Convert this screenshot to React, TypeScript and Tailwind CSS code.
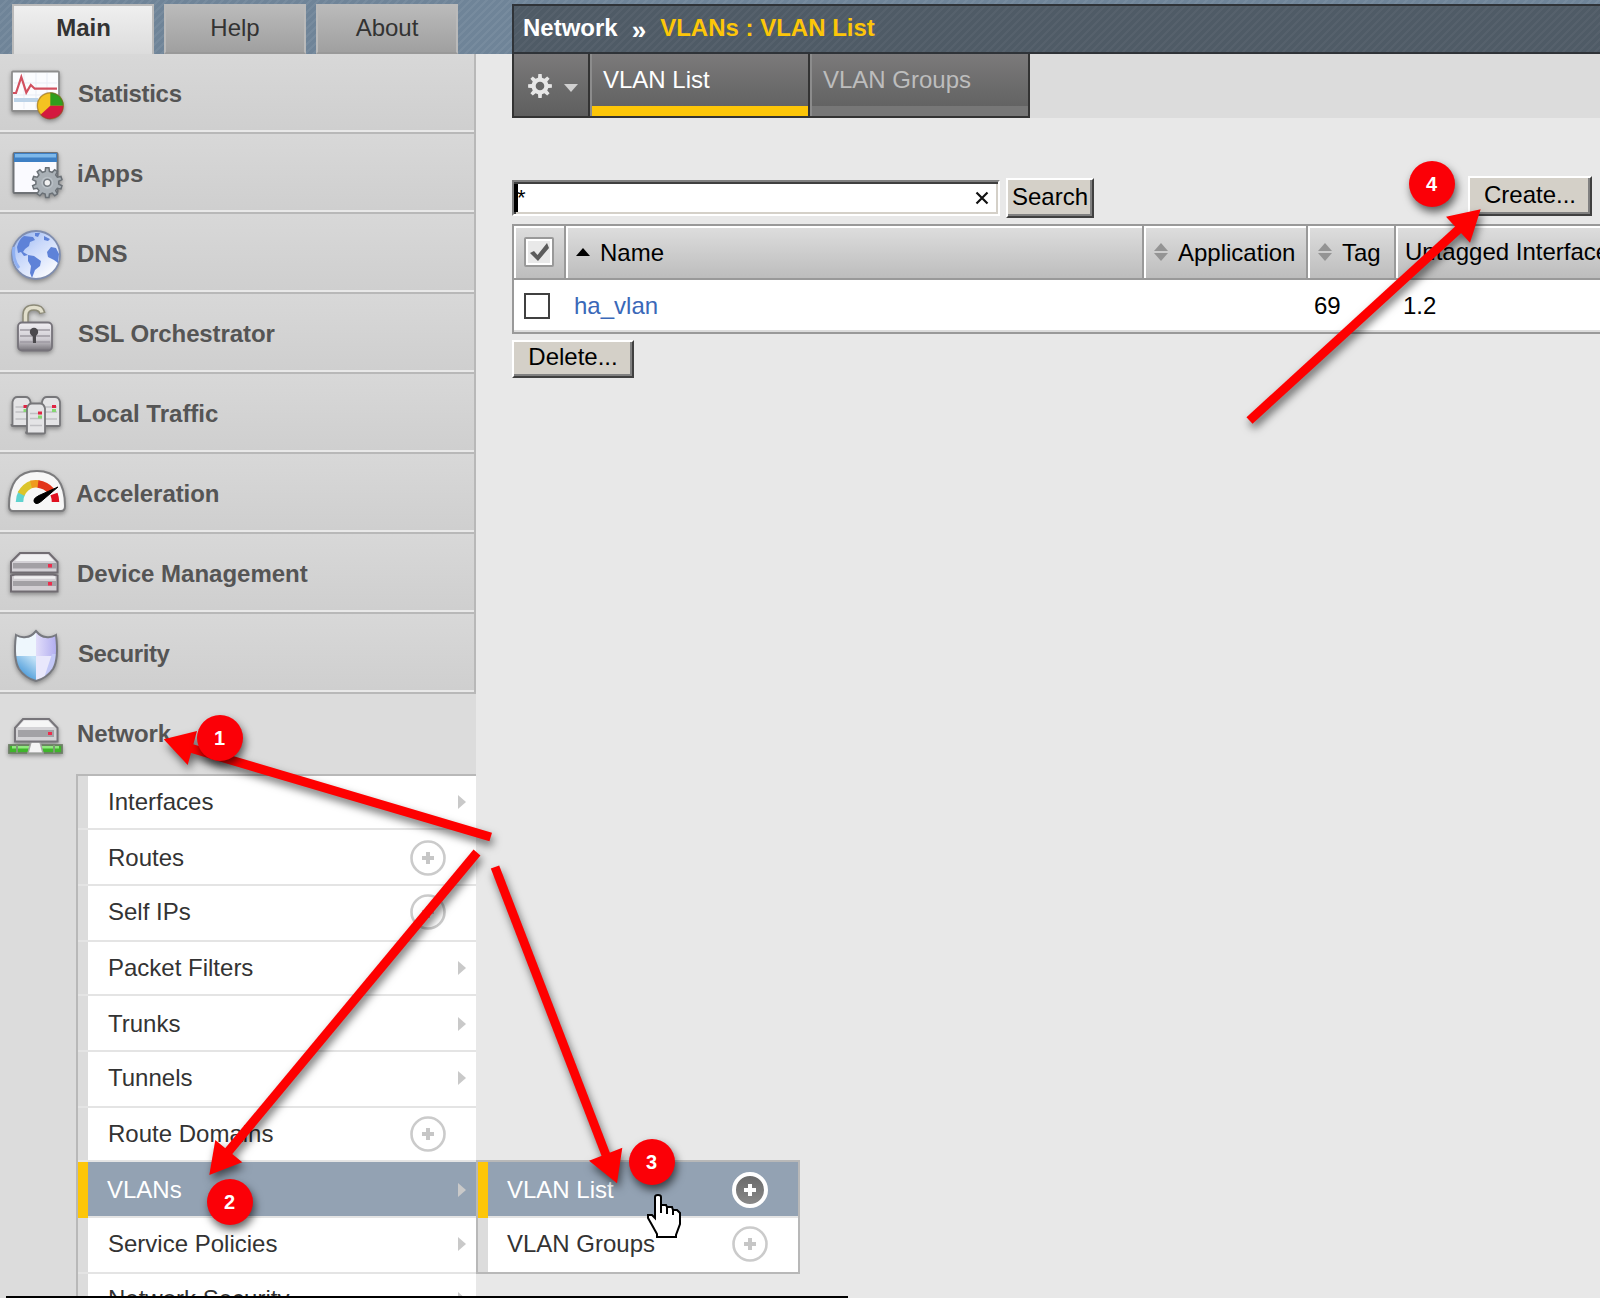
import React from "react";

type IconProps = { children: React.ReactNode };

function Icon({ children }: IconProps) {
  return (
    <svg
      width="76"
      height="76"
      viewBox="0 0 76 76"
      className="shrink-0 drop-shadow-[0_2px_2px_rgba(0,0,0,0.35)]"
    >
      {children}
    </svg>
  );
}

function gearPath(cx: number, cy: number, outer: number, inner: number, teeth: number) {
  const pts: string[] = [];
  const step = (Math.PI * 2) / teeth;
  for (let i = 0; i < teeth; i++) {
    const a = i * step - Math.PI / 2;
    const corners: [number, number][] = [
      [a - step * 0.3, inner],
      [a - step * 0.18, outer],
      [a + step * 0.18, outer],
      [a + step * 0.3, inner],
    ];
    corners.forEach(([t, r]) =>
      pts.push(`${(cx + Math.cos(t) * r).toFixed(2)},${(cy + Math.sin(t) * r).toFixed(2)}`)
    );
  }
  return `M${pts.join("L")}Z`;
}

const StatisticsIcon = () => (
  <Icon>
    <rect x="12" y="17.500" width="47" height="39.500" rx="1" fill="#fbfcfe" stroke="#8d8d8d" strokeWidth="1.800" />
    <path d="M14 29h43M14 41h43M24 19v36M36 19v36M47 19v36" stroke="#e9edf5" strokeWidth="1" />
    <rect x="14" y="44" width="24" height="4" fill="#bcd3e8" />
    <path d="M13 39h3l5.300-16 5 15.500 4.500-7.500 4 3.700H57" fill="none" stroke="#d2505f" strokeWidth="2.200" />
    <circle cx="50.300" cy="51.700" r="13.300" fill="#f4c321" />
    <path d="M50.300 51.700V38.400A13.300 13.300 0 0 1 63.600 51.700Z" fill="#2f9e1d" />
    <path d="M50.300 51.700H63.600A13.300 13.300 0 0 1 40.500 60.700Z" fill="#d4193f" />
    <circle cx="50.300" cy="51.700" r="13" fill="none" stroke="#7d5a2c" strokeOpacity="0.500" strokeWidth="1.400" />
  </Icon>
);

const IAppsIcon = () => (
  <Icon>
    <rect x="13.500" y="19" width="44" height="40" rx="1" fill="#fafaff" stroke="#6f7276" strokeWidth="2" />
    <rect x="14" y="19" width="43" height="9" fill="#3d7fc4" />
    <rect x="15" y="20" width="41" height="3.500" fill="#7db8ea" />
    <path d={gearPath(47.3, 48.7, 15, 11.5, 10)} fill="#a9b0b6" stroke="#6a7076" strokeWidth="1.500" />
    <circle cx="47.300" cy="48.700" r="6" fill="#b9c0c6" />
    <circle cx="47.300" cy="48.700" r="3.500" fill="#f2f2f2" stroke="#747a80" strokeWidth="1.600" />
  </Icon>
);

const DnsIcon = () => (
  <Icon>
    <defs>
      <linearGradient id="globe" x1="0" y1="0" x2="0.800" y2="1">
        <stop offset="0" stopColor="#8fb0ee" />
        <stop offset="0.450" stopColor="#c9d8fa" />
        <stop offset="1" stopColor="#ffffff" />
      </linearGradient>
    </defs>
    <circle cx="36" cy="41" r="24" fill="url(#globe)" stroke="#7f8dae" strokeWidth="1.800" />
    <path d="M17 33q2-8 7-11l9 1 2 3-5 2-1 4-4 3-2 3 5 3-4 1-3-4-3 1z" fill="#5e82d8" />
    <path d="M35 19l5 0-2 4-3-1zM44 22l6 3-2 2-4-1z" fill="#5e82d8" />
    <path d="M28 41l6 1 7 5-1 5-5 4-3 8-2-5 1-7-3-5z" fill="#5e82d8" />
    <path d="M47 38l4-5 5 1 3 6-1 9-4-3-6-3z" fill="#5e82d8" />
    <path d="M14 33q-2 12 5 21" fill="none" stroke="#8fb0f2" strokeWidth="3" />
  </Icon>
);

const SslIcon = () => (
  <Icon>
    <defs>
      <linearGradient id="lock" x1="0" y1="0" x2="0" y2="1">
        <stop offset="0" stopColor="#f0eef2" />
        <stop offset="0.600" stopColor="#cfccd2" />
        <stop offset="1" stopColor="#77747a" />
      </linearGradient>
    </defs>
    <path d="M25.500 29V21q0-7.500 8.500-7.500 7 0 8.500 6" fill="none" stroke="#8c8a78" strokeWidth="6.500" />
    <path d="M25.500 29V21q0-7.500 8.500-7.500 7 0 8 5" fill="none" stroke="#e2dfcc" strokeWidth="3.500" />
    <rect x="18" y="28.500" width="34" height="28" rx="4" fill="url(#lock)" stroke="#76737a" strokeWidth="1.800" />
    <path d="M20 36h30M20 42h30M20 48h30" stroke="#9e9aa2" strokeWidth="1.400" />
    <circle cx="34" cy="38" r="4.200" fill="#4b494d" />
    <path d="M32.500 40h3.500v9h-3z" fill="#4b494d" />
  </Icon>
);

function Tower({ x, y, h, led }: { x: number; y: number; h: number; led: number }) {
  return (
    <g>
      <path
        d={`M${x} ${y + h}V${y + 5}q1-5 5-5h8q4 0 5 5V${y + h}q0 1-1 1h-17q-1 0-1-1Z`}
        fill="#e4e4e6"
        stroke="#77777a"
        strokeWidth="1.800"
      />
      <path d={`M${x + 3} ${y + 10}h12M${x + 3} ${y + 15}h12M${x + 3} ${y + 22}h12`} stroke="#c0c0c4" strokeWidth="1.500" />
      <rect x={x + led} y={y + 8} width="4" height="3" fill="#e02443" />
      <rect x={x + led} y={y + 12} width="4" height="3" fill="#86d772" />
    </g>
  );
}

const LocalTrafficIcon = () => (
  <Icon>
    <Tower x={12.5} y={23} h={28} led={11} />
    <Tower x={42} y={23} h={28} led={10} />
    <Tower x={27} y={29.5} h={29} led={11} />
  </Icon>
);

const AccelerationIcon = () => (
  <Icon>
    <path d="M9 52q0-35 28-35t28 35q0 5-4 5H13q-4 0-4-5Z" fill="#f7f7f7" stroke="#7c7c7e" strokeWidth="2" />
    <path d="M19.500 48q0-5 2.500-9.500" fill="none" stroke="#5fd3cf" strokeWidth="7.500" />
    <path d="M21 40q4-7.500 11.500-10" fill="none" stroke="#dcc42a" strokeWidth="7.500" />
    <path d="M31 30.300q4-1 8-.3" fill="none" stroke="#ef9a1e" strokeWidth="7.500" />
    <path d="M38 30q8 1 13 7" fill="none" stroke="#e2351b" strokeWidth="7.500" />
    <path d="M54 40q1.500 4 1.500 8" fill="none" stroke="#e0101f" strokeWidth="7.500" />
    <path d="M34 46q0-2 5-4.500L58 33 41 47.500q-3 2.500-5 2-2.500-1-2-3.500z" fill="#000" stroke="#000" />
  </Icon>
);

function ServerFace({ y, h }: { y: number; h: number }) {
  return (
    <g>
      <rect x="13" y={y} width="43" height={h} fill="#a3a0a5" />
      <rect x="48" y={y + 1} width="4" height="3.500" fill="#ee2c4c" />
    </g>
  );
}

const DeviceIcon = () => (
  <Icon>
    <path d="M11 41.500l4-1h38l4.500 1v16H11z" fill="#d2ced3" stroke="#716c72" strokeWidth="2" />
    <path d="M14 43.500h41" stroke="#f0eff1" strokeWidth="2.500" />
    <ServerFace y={47} h={5} />
    <path d="M20 19h29l8.500 9v10.500H11V28z" fill="#d4d1d6" stroke="#716c72" strokeWidth="2" />
    <path d="M21 20.500h27l6 6.500H15z" fill="#f1f1f2" />
    <ServerFace y={29} h={5.5} />
  </Icon>
);

const SHIELD = "M36 17q-5 6-10 6-5 1-10-2-3 24 3 34 6 9 17 12 11-3 17-12 6-10 3-34-5 3-10 2-5 0-10-6z";

const SecurityIcon = () => (
  <Icon>
    <defs>
      <clipPath id="shield">
        <path d={SHIELD} />
      </clipPath>
      <linearGradient id="shieldL" x1="1" y1="0" x2="0.300" y2="1">
        <stop offset="0.100" stopColor="#bfe0f6" />
        <stop offset="0.800" stopColor="#3f93d6" />
      </linearGradient>
      <linearGradient id="shieldR" x1="0" y1="0" x2="1" y2="0">
        <stop offset="0" stopColor="#e2defa" />
        <stop offset="1" stopColor="#a9a5ee" />
      </linearGradient>
    </defs>
    <g clipPath="url(#shield)">
      <rect x="12" y="14" width="24" height="28" fill="#eef7fd" />
      <rect x="36" y="14" width="24" height="28" fill="url(#shieldR)" />
      <rect x="12" y="42" width="24" height="28" fill="url(#shieldL)" />
      <rect x="36" y="42" width="24" height="28" fill="#e9e8fc" />
      <path d="M52 40l6 0-4 14-10 10z" fill="#c3c8f7" />
    </g>
    <path d={SHIELD} fill="none" stroke="#77797f" strokeWidth="2" />
  </Icon>
);

const NetworkIcon = () => (
  <Icon>
    <rect x="9" y="51" width="53" height="8" fill="#3fb52b" stroke="#6d7f66" strokeWidth="1.800" />
    <rect x="12" y="52" width="47" height="2.500" fill="#8fe87d" />
    <path d="M17 51v8M54 51v8" stroke="#7c9a74" strokeWidth="2" />
    <path d="M31 48h9l3 11H28z" fill="#f4f4f4" stroke="#a5a5a5" strokeWidth="1.500" />
    <path d="M23 25h26l8.500 9v13.500H15V34z" fill="#d4d3d6" stroke="#77757a" strokeWidth="2" />
    <path d="M24 26.500h24l6 6.500H18z" fill="#f6f6f6" />
    <rect x="18" y="36" width="36" height="7" fill="#a3a2a6" />
    <rect x="48" y="38" width="4" height="3" fill="#ee2c4c" />
  </Icon>
);

const modules: [string, React.FC, string][] = [
  ["Statistics", StatisticsIcon, "pl-[2px] tracking-[-0.3px]"],
  ["iApps", IAppsIcon, "pl-[1px] tracking-[-0.1px]"],
  ["DNS", DnsIcon, "pl-[1px] tracking-[-0.1px]"],
  ["SSL Orchestrator", SslIcon, "pl-[2px] tracking-[-0.1px]"],
  ["Local Traffic", LocalTrafficIcon, "pl-[1px] tracking-normal"],
  ["Acceleration", AccelerationIcon, "pl-0 tracking-[-0.05px]"],
  ["Device Management", DeviceIcon, "pl-[1px] tracking-normal"],
  ["Security", SecurityIcon, "pl-[2px] tracking-[-0.4px]"],
];

function Chevron() {
  return (
    <svg width="8" height="14" viewBox="0 0 8 14" className="mr-[10px] shrink-0">
      <path d="M0 0L8 7 0 14Z" fill="#c9c9c9" />
    </svg>
  );
}

function Plus() {
  return (
    <svg width="36" height="36" viewBox="0 0 36 36" className="mr-[30px] shrink-0">
      <circle cx="18" cy="18" r="16.500" fill="#fff" stroke="#cbcbcb" strokeWidth="2.600" />
      <path d="M18 12v12M12 18h12" stroke="#c6c6c6" strokeWidth="4" />
    </svg>
  );
}

function PlusActive() {
  return (
    <svg width="36" height="36" viewBox="0 0 36 36" className="mr-[30px] shrink-0">
      <defs>
        <linearGradient id="plusFill" x1="0" y1="0" x2="0" y2="1">
          <stop offset="0" stopColor="#686868" />
          <stop offset="1" stopColor="#8a8a8a" />
        </linearGradient>
      </defs>
      <circle cx="18" cy="18" r="16" fill="url(#plusFill)" stroke="#fff" strokeWidth="4" />
      <path d="M18 12v12M12 18h12" stroke="#fff" strokeWidth="4" />
    </svg>
  );
}

const networkItems: [string, string, "arrow" | "plus"][] = [
  ["Interfaces", "h-[54px]", "arrow"],
  ["Routes", "h-[56px] pt-[1px]", "plus"],
  ["Self IPs", "h-[56px] pb-[2px]", "plus"],
  ["Packet Filters", "h-[54px]", "arrow"],
  ["Trunks", "h-[56px] pt-[1px]", "arrow"],
  ["Tunnels", "h-[56px] pb-[2px]", "arrow"],
  ["Route Domains", "h-[54px]", "plus"],
  ["VLANs", "h-[56px] pt-[1px]", "arrow"],
  ["Service Policies", "h-[56px] pb-[2px]", "arrow"],
  ["Network Security", "h-[56px] pb-[5px]", "arrow"],
];

function SideMenu() {
  return (
    <aside className="h-[1244px] w-[476px] shrink-0 overflow-hidden bg-[#dcdcdc]">
      {modules.map(([label, Glyph, spacing]) => (
        <div key={label} className="flex h-[80px] flex-col border-r-2 border-[#b8b8b8]">
          <div className="flex h-[76px] items-center bg-linear-to-b from-[#d8d8d8] to-[#cfcfcf]">
            <Glyph />
            <span className={`${spacing} pt-[3px] text-[24px] leading-[73px] font-bold text-[#555]`}>{label}</span>
          </div>
          <div className="h-[2px] bg-[#e8e8e8]" />
          <div className="h-[2px] bg-[#b8b8b8]" />
        </div>
      ))}
      <div className="flex h-[80px] items-start">
        <NetworkIcon />
        <span className="pt-[3px] pl-[1px] text-[24px] leading-[73px] font-bold tracking-[-0.1px] text-[#555]">Network</span>
      </div>
      <div className="ml-[76px] border-t-2 border-l-2 border-[#b8b8b8]">
        {networkItems.map(([label, size, kind]) => {
          const active = label === "VLANs";
          return (
            <div key={label} className="flex">
              <div className={active ? "w-[10px] bg-[#fdc608]" : "w-[10px] border-b-2 border-[#e4e4e4] bg-[#dcdcdc]"} />
              <div
                className={`${size} flex flex-1 items-center border-b-2 border-[#e4e4e4] ${
                  active ? "bg-[#93a2b3] pl-[19px] text-white" : "bg-white pl-[20px] text-[#333]"
                }`}
              >
                <span className="flex-1 text-[24px] leading-[48px]">{label}</span>
                {kind === "arrow" ? <Chevron /> : <Plus />}
              </div>
            </div>
          );
        })}
      </div>
    </aside>
  );
}

function SortGlyph() {
  return (
    <svg width="14" height="18" viewBox="0 0 14 18" className="shrink-0">
      <path d="M7 0L14 8H0ZM7 18L0 10H14Z" fill="#949494" />
    </svg>
  );
}

const bevel =
  "border-2 border-t-white border-l-white border-r-[#404040] border-b-[#404040] bg-[#d4d0c8] shadow-[inset_-2px_-2px_0_#808080] text-[24px] text-black";

const head =
  "flex shrink-0 items-center border-r-2 border-[#999] shadow-[inset_2px_2px_0_#fff] bg-linear-to-b from-[#dedede] to-[#bdbdbd] text-[24px] text-black whitespace-nowrap";

function VlanTable() {
  return (
    <div className="w-[1088px] overflow-hidden border-t-2 border-l-2 border-[#999]">
      <div className="flex h-[54px] border-b-2 border-[#999]">
        <div className={`${head} w-[52px] pl-[10px]`}>
          <svg width="30" height="30" viewBox="0 0 30 30">
            <rect x="1" y="1" width="28" height="28" rx="1" fill="#fff" stroke="#999" strokeWidth="2" />
            <rect x="4" y="4" width="22" height="22" fill="#e9e9e9" />
            <path d="M6 16l4-2 3.500 4L23 6l2 5-11 13z" fill="#5c5c5c" />
          </svg>
        </div>
        <div className={`${head} w-[578px] pl-[10px]`}>
          <svg width="14" height="8" viewBox="0 0 14 8">
            <path d="M7 0L14 8H0Z" fill="#000" />
          </svg>
          <span className="pt-[2px] pl-[10px]">Name</span>
        </div>
        <div className={`${head} w-[164px] pl-[10px]`}>
          <SortGlyph />
          <span className="pt-[2px] pl-[10px]">Application</span>
        </div>
        <div className={`${head} w-[88px] pl-[10px]`}>
          <SortGlyph />
          <span className="pt-[2px] pl-[10px]">Tag</span>
        </div>
        <div className={`${head} w-[300px] pl-[9px]`}>
          <span>Untagged Interfaces</span>
        </div>
      </div>
      <div className="flex h-[54px] items-center border-b-2 border-[#999] bg-white text-[24px] text-black shadow-[inset_0_-2px_0_#dcdcdc]">
        <div className="ml-[10px] h-[26px] w-[26px] border-2 border-[#404040] bg-white" />
        <span className="w-[764px] pl-[24px] text-[#3a68b8]">ha_vlan</span>
        <span className="w-[89px]">69</span>
        <span>1.2</span>
      </div>
    </div>
  );
}

function Content() {
  return (
    <main className="flex flex-1 flex-col pl-[36px]">
      <div className="flex h-[64px] bg-[#dcdcdc]">
        <div className="flex w-[518px] border-2 border-t-0 border-[#333] bg-linear-to-b from-[#7c7a7b] via-[#6c6c6c] to-[#5f5f5f]">
          <div className="flex w-[76px] items-center border-r-2 border-[#333] pt-[2px] pl-[14px]">
            <svg width="24" height="24" viewBox="0 0 24 24">
              <path d={gearPath(12, 12, 12, 8.5, 8)} fill="#e6e6e6" />
              <circle cx="12" cy="12" r="4.300" fill="#666" />
            </svg>
            <svg width="14" height="8" viewBox="0 0 14 8" className="mt-[4px] ml-[12px]">
              <path d="M0 0H14L7 8Z" fill="#d0d0d0" />
            </svg>
          </div>
          <div className="flex w-[220px] flex-col border-r-2 border-l-2 border-r-[#333] border-l-[#8c8c8c]">
            <span className="h-[52px] pl-[11px] text-[24px] leading-[52px] text-white">VLAN List</span>
            <div className="h-[10px] bg-[#fdc608]" />
          </div>
          <div className="flex flex-1 flex-col border-l-2 border-[#8c8c8c]">
            <span className="h-[52px] pl-[11px] text-[24px] leading-[52px] text-[#bdbdbd]">VLAN Groups</span>
            <div className="h-[10px] bg-[#777]" />
          </div>
        </div>
      </div>
      <div className="mt-[58px] flex h-[48px]">
        <div className="mt-[4px] flex h-[36px] w-[488px] items-center justify-between border-2 border-t-[#808080] border-r-white border-b-white border-l-[#808080] bg-white pr-[9px] shadow-[inset_2px_2px_0_#404040,inset_-2px_-2px_0_#d4d0c8]">
          <div className="flex h-[28px] items-start border-l-4 border-black text-[22px] leading-[28px]">
            <span className="-ml-[1px]">*</span>
          </div>
          <svg width="14" height="14" viewBox="0 0 14 14">
            <path d="M1.500 1.500L12.500 12.500M12.500 1.500L1.500 12.500" stroke="#111" strokeWidth="2.200" />
          </svg>
        </div>
        <button className={`${bevel} mt-[2px] ml-[6px] h-[40px] w-[88px] pb-[2px] leading-[30px]`}>Search</button>
        <button className={`${bevel} ml-[374px] h-[40px] w-[124px] pb-[2px] leading-[30px]`}>Create...</button>
      </div>
      <VlanTable />
      <button className={`${bevel} mt-[6px] h-[38px] w-[122px] pb-[4px] leading-[30px]`}>Delete...</button>
    </main>
  );
}

function Header() {
  return (
    <header className="flex h-[54px] bg-[#6f8498] bg-[repeating-linear-gradient(135deg,transparent_0px,transparent_3.660px,rgba(255,255,255,0.06)_3.660px,rgba(255,255,255,0.06)_5.657px)] pt-[4px] pl-[12px]">
      <div className="flex w-[500px] gap-[10px] text-center text-[24px] leading-[44px] text-[#333]">
        <div className="h-[50px] w-[142px] border-2 border-b-0 border-[#bababa] bg-linear-to-b from-[#efefef] to-[#dcdcdc] pl-[1px] font-bold">Main</div>
        <div className="h-[50px] w-[142px] border-2 border-[#bababa] border-b-[#999] bg-linear-to-b from-[#bababa] to-[#a0a0a0]">Help</div>
        <div className="h-[50px] w-[142px] border-2 border-[#bababa] border-b-[#999] bg-linear-to-b from-[#bababa] to-[#a0a0a0]">About</div>
      </div>
      <div className="flex flex-1 border-2 border-r-0 border-[#2f3338] bg-[#4f5b66] bg-[repeating-linear-gradient(135deg,transparent_0px,transparent_3.660px,rgba(255,255,255,0.04)_3.660px,rgba(255,255,255,0.04)_5.657px)] pl-[9px] text-[24px] leading-[44px] font-bold whitespace-pre">
        <span className="text-white">Network</span>
        <span className="pt-[2px] pl-[14px] text-[26px] text-white">»</span>
        <span className="pl-[14px] text-[#fdc608]">VLANs : VLAN List</span>
      </div>
    </header>
  );
}

function FlyOut() {
  return (
    <div className="absolute top-[1160px] left-[476px] w-[324px] border-2 border-[#b8b8b8] text-[24px] leading-[48px]">
      <div className="flex h-[56px]">
        <div className="w-[10px] bg-[#fdc608]" />
        <div className="flex flex-1 items-center border-b-2 border-[#e4e4e4] bg-[#93a2b3] pt-[1px] pl-[19px] text-white">
          <span className="flex-1">VLAN List</span>
          <PlusActive />
        </div>
      </div>
      <div className="flex h-[54px]">
        <div className="w-[10px] bg-[#dcdcdc]" />
        <div className="flex flex-1 items-center bg-white pb-[2px] pl-[19px] text-[#333]">
          <span className="flex-1">VLAN Groups</span>
          <Plus />
        </div>
      </div>
    </div>
  );
}

function Annotations() {
  const arrows = [
    { tail: "490.7,837", base: "190,748", head: "163.7,739.3 197,731 187.700,765" },
    { tail: "477,852.5", base: "228,1152", head: "209.3,1175 215.3,1140 242.300,1162.300" },
    { tail: "495,867", base: "606,1155", head: "617,1183.3 589,1160.7 622.300,1147.700" },
    { tail: "1249.5,420.5", base: "1459,229", head: "1480.7,209.3 1446,216.700 1470,242.700" },
  ];
  const pins: [number, number][] = [
    [220, 738],
    [230, 1202],
    [652, 1162],
    [1432, 184],
  ];
  return (
    <svg width="1600" height="1298" viewBox="0 0 1600 1298" className="pointer-events-none absolute inset-0">
      {arrows.map((a) => (
        <g key={a.tail} className="drop-shadow-[2px_5px_4px_rgba(0,0,0,0.55)]">
          <polyline points={`${a.tail} ${a.base}`} stroke="#fe0000" strokeWidth="9" />
          <polygon points={a.head} fill="#fe0000" />
        </g>
      ))}
      {pins.map(([x, y], i) => (
        <g key={i}>
          <circle cx={x} cy={y} r="23" fill="#fb0007" className="drop-shadow-[2px_5px_4px_rgba(0,0,0,0.6)]" />
          <text x={x - 0.5} y={y + 7} textAnchor="middle" fontSize="20" fontWeight="700" fill="#fff">
            {i + 1}
          </text>
        </g>
      ))}
      <path
        d="M655 1218V1197q0-2 3-2t3 2v8h5l1 2h5l1 3h4l3 3v11l-4 11v2h-19v-3l-5-9-4-7v-3h4z"
        fill="#fff"
        stroke="#000"
        strokeWidth="2"
      />
      <path d="M661 1205v8M667 1207v7M673 1210v5" stroke="#000" strokeWidth="2" />
      <rect x="6" y="1296" width="842" height="2" fill="#000" />
    </svg>
  );
}

export default function App() {
  return (
    <div className="relative h-[1298px] w-[1600px] overflow-hidden bg-[#e8e8e8] font-['Liberation_Sans',Arial,sans-serif]">
      <Header />
      <div className="flex">
        <SideMenu />
        <Content />
      </div>
      <FlyOut />
      <Annotations />
    </div>
  );
}
